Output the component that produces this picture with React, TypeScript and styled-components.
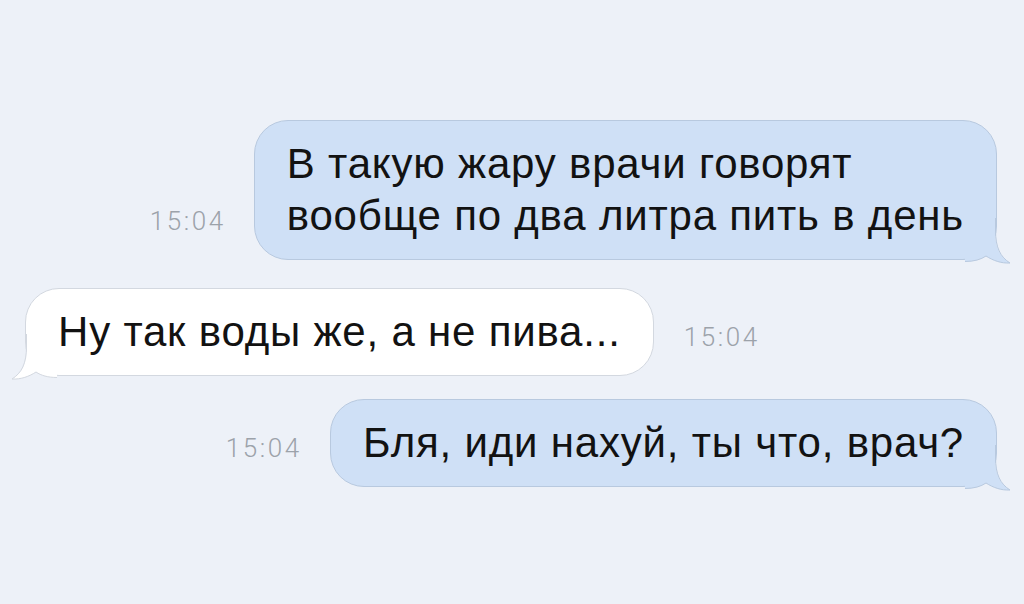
import React from 'react';
import styled, { createGlobalStyle } from 'styled-components';

type Side = 'out' | 'in';

type Message = {
  id: number;
  side: Side;
  text: string;
  time: string;
  spaceBefore: number;
};

const messages: Message[] = [
  {
    id: 1,
    side: 'out',
    text: 'В такую жару врачи говорят\nвообще по два литра пить в день',
    time: '15:04',
    spaceBefore: 0,
  },
  {
    id: 2,
    side: 'in',
    text: 'Ну так воды же, а не пива...',
    time: '15:04',
    spaceBefore: 28,
  },
  {
    id: 3,
    side: 'out',
    text: 'Бля, иди нахуй, ты что, врач?',
    time: '15:04',
    spaceBefore: 23,
  },
];

const colours = {
  page: '#edf1f8',
  out: '#cfe0f6',
  outBorder: '#b8c9df',
  in: '#ffffff',
  inBorder: '#d3d8e0',
  text: '#121212',
  time: '#9ca2aa',
};

const GlobalStyle = createGlobalStyle`
  html, body {
    margin: 0;
    padding: 0;
    background: ${colours.page};
  }
  body {
    font-family: "Liberation Sans", Arial, sans-serif;
    -webkit-font-smoothing: antialiased;
  }
`;

// Rounded-corner replacement with the little curled tail, drawn for the
// right-hand side; the incoming bubble mirrors it.
const Tail: React.FC<{ side: Side }> = ({ side }) => {
  const fill = side === 'out' ? colours.out : colours.in;
  const stroke = side === 'out' ? colours.outBorder : colours.inBorder;
  return (
    <TailSvg $side={side} width="46" height="46" viewBox="0 0 46 46">
      <path
        d="M0 0 H30 V12 C30 30 35 39 45 45 C36 45.5 28 42.5 21 38 C16 41.5 9 43.5 0 43.5 Z"
        fill={fill}
      />
      <path
        d="M30.5 0 V12 C30.5 30 35.5 39 45 45 C36 45.5 28 42.5 21 38 C16 41.5 9 43.5 0 43.5"
        fill="none"
        stroke={stroke}
        strokeWidth="1"
      />
    </TailSvg>
  );
};

const App: React.FC = () => (
  <>
    <GlobalStyle />
    <Chat>
      {messages.map(m => (
        <Row key={m.id} $side={m.side} $top={m.spaceBefore}>
          <Bubble $side={m.side}>
            {m.text}
            <Tail side={m.side} />
          </Bubble>
          <Time>{m.time}</Time>
        </Row>
      ))}
    </Chat>
  </>
);

const Chat = styled.div`
  width: 1024px;
  height: 604px;
  box-sizing: border-box;
  padding: 120px 27px 0 25px;
  display: flex;
  flex-direction: column;
  overflow: hidden;
`;

const Row = styled.div<{ $side: Side; $top: number }>`
  display: flex;
  flex-direction: ${p => (p.$side === 'out' ? 'row-reverse' : 'row')};
  justify-content: flex-start;
  align-items: last baseline;
  gap: ${p => (p.$side === 'out' ? '28px' : '30px')};
  margin-top: ${p => p.$top}px;
`;

const Bubble = styled.div<{ $side: Side }>`
  position: relative;
  box-sizing: border-box;
  padding: 17px 32px 17px 32px;
  border-radius: 34px;
  background: ${p => (p.$side === 'out' ? colours.out : colours.in)};
  border: 1px solid
    ${p => (p.$side === 'out' ? colours.outBorder : colours.inBorder)};
  color: ${colours.text};
  font-size: 42px;
  line-height: 52px;
  letter-spacing: 0.8px;
  white-space: pre-line;
`;

const TailSvg = styled.svg<{ $side: Side }>`
  position: absolute;
  bottom: -5px;
  ${p => (p.$side === 'out' ? 'right: -15px;' : 'left: -15px;')}
  transform: ${p => (p.$side === 'out' ? 'none' : 'scaleX(-1)')};
  overflow: visible;
`;

const Time = styled.span`
  font-family: Roboto, "Liberation Sans", sans-serif;
  font-size: 26px;
  font-weight: 300;
  letter-spacing: 2.6px;
  color: ${colours.time};
`;

export default App;
